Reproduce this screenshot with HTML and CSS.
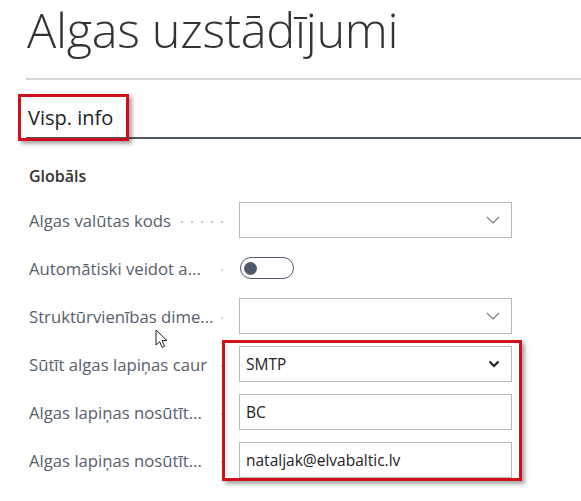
FILE: index.html
```html
<!DOCTYPE html>
<html lang="lv">
<head>
<meta charset="utf-8">
<title>Algas uzstādījumi</title>
<link rel="stylesheet" href="styles.css">
</head>
<body>
<div class="page">
  <h1 class="title">Algas uzstādījumi</h1>
  <div class="rule"></div>
  <div class="tab">
    <span class="tab-label">Visp. info</span>
    <span class="annot annot-tab"></span>
  </div>
  <div class="group">Globāls</div>
  <div class="form">
    <div class="row">
      <span class="label"><span class="label-text">Algas valūtas kods</span><span class="leader"></span></span>
      <div class="field box lookup"><svg class="chev" width="14" height="8" viewBox="0 0 14 8"><path d="M1 1 L7 7 L13 1" fill="none" stroke="#777" stroke-width="1.1"/></svg></div>
    </div>
    <div class="row">
      <span class="label"><span class="label-text">Automātiski veidot a...</span><span class="dot"></span></span>
      <div class="field"><span class="toggle"><span class="knob"></span></span></div>
    </div>
    <div class="row">
      <span class="label"><span class="label-text">Struktūrvienības dime...</span><span class="dot"></span></span>
      <div class="field box lookup"><svg class="chev" width="14" height="8" viewBox="0 0 14 8"><path d="M1 1 L7 7 L13 1" fill="none" stroke="#777" stroke-width="1.1"/></svg></div>
    </div>
    <div class="row">
      <span class="label"><span class="label-text">Sūtīt algas lapiņas caur</span><span class="dot"></span></span>
      <div class="field box select"><span class="value">SMTP</span><svg class="chev-bold" width="12" height="8" viewBox="0 0 12 8"><path d="M1.5 1.5 L6 6 L10.5 1.5" fill="none" stroke="#222" stroke-width="2.2"/></svg></div>
    </div>
    <div class="row">
      <span class="label"><span class="label-text">Algas lapiņas nosūtīt...</span><span class="dot"></span></span>
      <div class="field box"><span class="value">BC</span></div>
    </div>
    <div class="row">
      <span class="label"><span class="label-text">Algas lapiņas nosūtīt...</span><span class="dot"></span></span>
      <div class="field box"><span class="value">nataljak@elvabaltic.lv</span></div>
    </div>
    <div class="row row-cut">
      <span class="label"><span class="label-text">Nākotnes darbi</span></span>
    </div>
    <span class="annot annot-fields"></span>
    <svg class="cursor" width="14" height="20" viewBox="0 0 14 20"><path d="M1 1 L1 16 L4.6 12.6 L7.2 18.4 L9.6 17.3 L7 11.6 L12 11.6 Z" fill="#fff" stroke="#222" stroke-width="1" stroke-linejoin="round"/></svg>
  </div>
</div>
</body>
</html>
```

FILE: styles.css
```css
html, body {
  margin: 0;
  padding: 0;
  background: #ffffff;
}
body {
  font-family: "Open Sans", "Noto Sans", sans-serif;
  color: #333;
  overflow: hidden;
  height: 501px;
}
.page {
  padding-left: 26px;
}
.title {
  margin: 0;
  padding: 0 0 0 1px;
  font-weight: 300;
  font-size: 48.7px;
  line-height: 58px;
  color: #333;
  letter-spacing: -0.3px;
  height: 62px;
}
.rule {
  margin-top: 16px;
  height: 2px;
  background: #d5d8dc;
}
.tab {
  position: relative;
  margin-top: 22px;
  height: 35px;
  border-bottom: 2px solid #4f5966;
  padding-left: 2px;
}
.tab-label {
  font-size: 20px;
  font-weight: 500;
  color: #222;
  line-height: 32px;
}
.annot {
  position: absolute;
  border: 3px solid #d10f1a;
  box-shadow: 3px 3px 4px rgba(0, 0, 0, 0.35);
}
.annot-tab {
  left: -8px;
  top: -8px;
  width: 105px;
  height: 41px;
}
.group {
  margin-top: 26px;
  padding-left: 3px;
  font-size: 16px;
  font-weight: 600;
  color: #333;
  line-height: 22px;
}
.form {
  position: relative;
  margin-top: 15px;
  padding-left: 3px;
}
.row {
  display: flex;
  align-items: center;
  height: 36px;
  margin-bottom: 12px;
}
.label {
  display: flex;
  align-items: center;
  width: 210px;
  flex: none;
  font-size: 16.7px;
  color: #56606c;
  white-space: nowrap;
}
.label-text {
  flex: none;
}
.leader {
  flex: 1;
  height: 2px;
  margin: 3px 14px 0 8px;
  background-image: radial-gradient(circle at 7px 50%, #bfc2c6 0.8px, transparent 1.1px);
  background-size: 10px 2px;
  background-position: right center;
  background-repeat: repeat-x;
}
.dot {
  flex: none;
  width: 2px;
  height: 2px;
  border-radius: 50%;
  background: #c6c8cb;
  margin: 3px 0 0 auto;
  position: relative;
  right: 16px;
}
.field {
  width: 273px;
  height: 36px;
  box-sizing: border-box;
  display: flex;
  align-items: center;
}
.box {
  border: 1px solid #b9b9b9;
  padding: 0 11px 0 6px;
  justify-content: space-between;
}
.lookup {
  justify-content: flex-end;
  padding-right: 11px;
}
.value {
  font-size: 15.5px;
  color: #222;
}
.chev-bold {
  margin-left: auto;
}
.toggle {
  display: flex;
  align-items: center;
  width: 54px;
  height: 22px;
  box-sizing: border-box;
  border: 1.5px solid #4f5b6d;
  border-radius: 11px;
  padding-left: 3px;
  margin-left: 1px;
}
.knob {
  width: 13px;
  height: 13px;
  border-radius: 50%;
  background: #4f5b6d;
}
.row-cut {
  height: 20px;
  align-items: flex-start;
  padding-top: 5px;
}
.annot-fields {
  left: 196px;
  top: 138px;
  width: 294px;
  height: 135px;
}
.cursor {
  position: absolute;
  left: 129px;
  top: 127px;
}
```
